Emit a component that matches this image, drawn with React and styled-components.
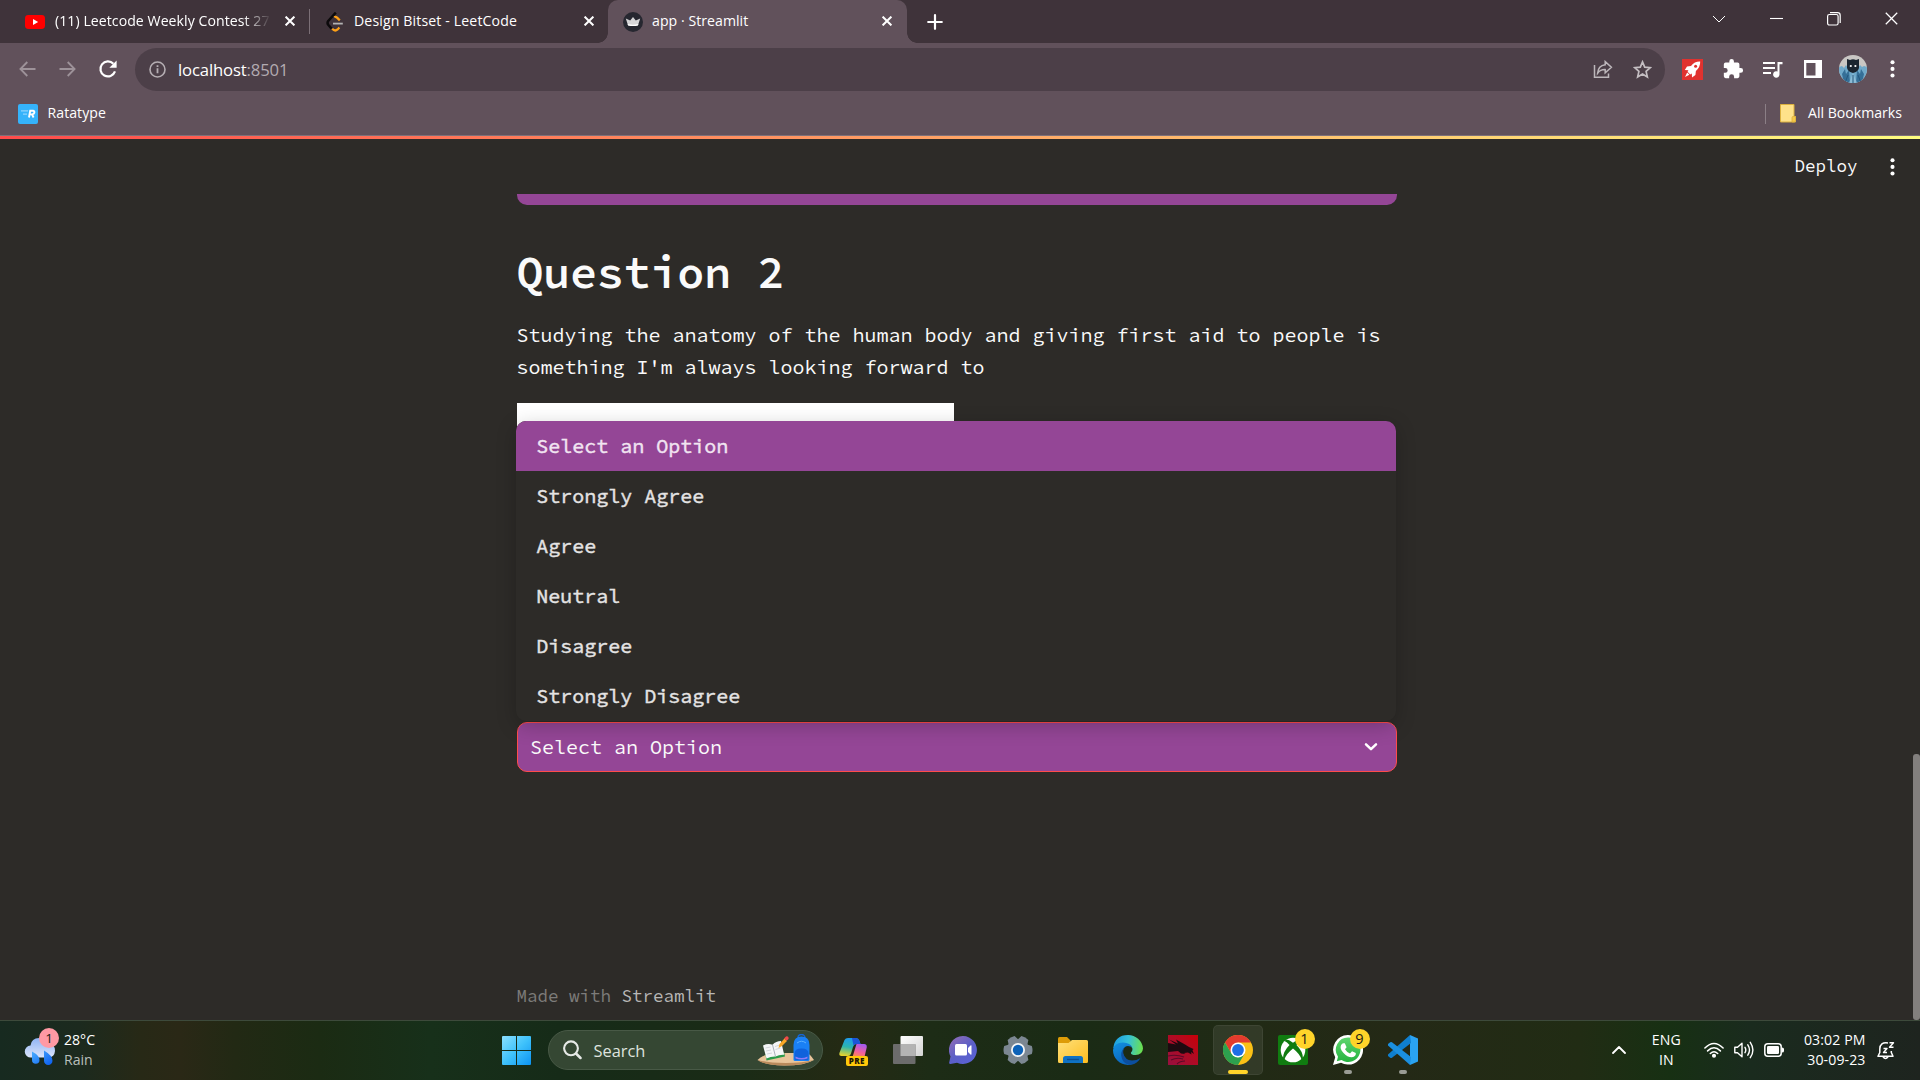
import React from 'react';
import styled, { createGlobalStyle } from 'styled-components';

const GlobalStyle = createGlobalStyle`
  * { box-sizing: border-box; }
  body { margin: 0; background: #2d2b28; overflow: hidden; }
`;

const ui = `'Open Sans', 'Noto Sans', sans-serif`;
const mono = `'Source Code Pro', 'Noto Sans Mono CJK SC', 'DejaVu Sans Mono', monospace`;

const Screen = styled.div`
  width: 1920px;
  height: 1080px;
  display: flex;
  flex-direction: column;
  overflow: hidden;
  font-family: ${ui};
  color: #fff;
`;

/* ---------- browser chrome ---------- */

const TabStrip = styled.header`
  height: 43px;
  flex: none;
  display: flex;
  align-items: stretch;
  background: #3f333a;
`;

const Tab = styled.div`
  width: ${(p) => p.$width}px;
  padding-left: ${(p) => p.$pad}px;
  display: flex;
  align-items: center;
  position: relative;
  background: ${(p) => (p.$active ? '#61515b' : 'transparent')};
  border-radius: 10px 10px 0 0;
  ${(p) =>
    p.$active &&
    `
    &::before, &::after {
      content: '';
      position: absolute;
      bottom: 0;
      width: 10px;
      height: 10px;
    }
    &::before { left: -10px; background: radial-gradient(circle at 0 0, transparent 9.5px, #61515b 10px); }
    &::after { right: -10px; background: radial-gradient(circle at 100% 0, transparent 9.5px, #61515b 10px); }
  `}
`;

const TabTitle = styled.span`
  flex: 1;
  margin-left: ${(p) => p.$gap}px;
  font-size: 14.1px;
  line-height: 20px;
  letter-spacing: ${(p) => p.$track || 0}px;
  white-space: nowrap;
  overflow: hidden;
  margin-top: -1px;
  ${(p) => p.$fade && `-webkit-mask-image: linear-gradient(90deg, #000 188px, transparent 216px);`}
`;

const CloseBox = styled.span`
  width: 20px;
  height: 20px;
  margin-right: ${(p) => p.$right}px;
  margin-top: -1px;
  display: grid;
  place-items: center;
`;

const TabDivider = styled.span`
  width: 1px;
  height: 25px;
  margin-top: 9px;
  background: #7b6f76;
`;

const NewTab = styled.span`
  width: 56px;
  display: grid;
  place-items: center;
`;

const WindowControls = styled.div`
  margin-left: auto;
  display: flex;
  height: 37px;
`;

const WindowButton = styled.span`
  width: 57.4px;
  display: grid;
  place-items: center;
`;

const Toolbar = styled.div`
  height: 61px;
  padding-top: 5px;
  flex: none;
  display: flex;
  align-items: flex-start;
  background: #61515b;
`;

const NavGroup = styled.div`
  width: 135px;
  height: 42px;
  padding-left: 7.5px;
  display: flex;
  align-items: center;
`;

const NavButton = styled.span`
  width: 40px;
  display: grid;
  place-items: center;
`;

const AddressBar = styled.div`
  width: 1530px;
  height: 43px;
  padding: 0 2.5px 0 14px;
  border-radius: 22px;
  display: flex;
  align-items: center;
  background: #4c3f48;
`;

const Address = styled.span`
  flex: 1;
  margin-left: 12px;
  font-size: 16.7px;
  letter-spacing: -0.15px;
  span { color: #b3abb1; }
`;

const AddressIcon = styled.span`
  width: 40px;
  display: grid;
  place-items: center;
`;

const Extensions = styled.div`
  height: 42px;
  padding-left: 7.5px;
  display: flex;
  align-items: center;
`;

const ExtButton = styled.span`
  width: 40px;
  display: grid;
  place-items: center;
`;

const Bookmarks = styled.div`
  height: 31px;
  padding: 0 18px;
  flex: none;
  display: flex;
  align-items: flex-start;
  background: #61515b;
  font-size: 14.1px;
  line-height: 20px;
`;

const BookmarkLabel = styled.span`
  margin-left: ${(p) => p.$gap}px;
  margin-top: -1px;
  letter-spacing: ${(p) => p.$track || 0}px;
`;

const BookmarkDivider = styled.span`
  width: 1px;
  height: 20px;
  margin-left: auto;
  margin-right: 14px;
  background: #8b7f86;
`;

/* ---------- page ---------- */

const PageArea = styled.main`
  height: 885px;
  flex: none;
  position: relative;
  background: #2d2b28;
  border-top: 1px solid #7d7079;
  font-family: ${mono};
  color: #fafafa;
`;

const Decoration = styled.div`
  height: 3px;
  background: linear-gradient(90deg, #ff4b4b, #fffd80);
`;

const AppHeader = styled.div`
  height: 55px;
  padding-right: 18px;
  display: flex;
  justify-content: flex-end;
  align-items: center;
`;

const MonoText = styled.span`
  margin-top: -2px;
  font-size: 17.5px;
  line-height: 28px;
`;

const Kebab = styled.span`
  width: 20px;
  margin-left: 24.5px;
  display: grid;
  place-items: center;
`;

const Column = styled.div`
  width: 880px;
  margin-left: 517px;
`;

const PreviousSelect = styled.div`
  height: 11px;
  border-radius: 0 0 10px 10px;
  background: #944696;
`;

const Heading = styled.h1`
  margin: 40px 0 0 -0.5px;
  font-size: 45px;
  line-height: 54px;
  font-weight: 600;
  letter-spacing: -0.005em;
`;

const Paragraph = styled.p`
  margin: 20px 0 0 -0.4px;
  width: 880px;
  font-size: 20px;
  line-height: 32px;
`;

const SelectWrap = styled.div`
  position: relative;
  margin-top: 20px;
`;

const ImageStub = styled.div`
  width: 437px;
  height: 60px;
  background: #fff;
`;

const SelectBox = styled.div`
  height: 50px;
  margin-top: 259px;
  padding: 0 18px 0 12px;
  display: flex;
  align-items: center;
  justify-content: space-between;
  border: 1px solid #ff4b4b;
  border-radius: 10px;
  background: #944696;
  font-size: 20px;
  line-height: 32px;
`;

const Menu = styled.ul`
  position: absolute;
  top: 18px;
  left: -0.7px;
  width: 879.7px;
  margin: 0;
  padding: 0;
  list-style: none;
  border-radius: 10px;
  overflow: hidden;
  background: #2d2b28;
  box-shadow: 0 5px 20px rgba(0, 0, 0, 0.22);
`;

const Option = styled.li`
  height: 50px;
  padding: 0 20px 1px;
  display: flex;
  align-items: center;
  font-size: 20px;
  line-height: 32px;
  -webkit-text-stroke: 0.45px currentColor;
  color: ${(p) => (p.$selected ? '#f1e4f1' : '#e4e3e3')};
  background: ${(p) => (p.$selected ? '#944696' : 'transparent')};
`;

const Footer = styled.footer`
  margin-top: 210px;
  margin-left: -0.4px;
  font-size: 17.5px;
  line-height: 28px;
  color: #7d7c7a;
  span { color: #b8b7b6; }
`;

const Scrollbar = styled.div`
  position: absolute;
  right: 0;
  bottom: 0;
  width: 7px;
  height: 266px;
  border-radius: 3px;
  background: #827f7d;
`;

/* ---------- taskbar ---------- */

const Taskbar = styled.nav`
  height: 60px;
  flex: none;
  display: flex;
  align-items: center;
  border-top: 1px solid #3d4a3b;
  background: linear-gradient(
    90deg,
    #172a20 0px, #1c2a1e 80px, #272916 140px, #2a2816 180px, #222914 235px, #1b2b13 320px,
    #17301a 430px, #162b18 560px, #1a2b16 740px, #252a14 850px, #1d2c16 930px, #1a2b15 1080px,
    #212a15 1250px, #242916 1400px, #212c14 1580px, #173013 1670px, #1a2b1e 1750px, #1e241f 1920px
  );
  font-size: 14.1px;
  line-height: 20px;
`;

const Weather = styled.div`
  width: 489px;
  padding-left: 24px;
  display: flex;
  align-items: center;
`;

const WeatherIcon = styled.div`
  position: relative;
  width: 32px;
  height: 40px;
`;

const Stack = styled.div`
  display: flex;
  flex-direction: column;
  margin-top: -2px;
  align-items: ${(p) => p.$align || 'flex-start'};
  margin-left: ${(p) => p.$gap || 0}px;
  letter-spacing: ${(p) => p.$track || 0}px;
`;

const Dim = styled.span`
  color: #b9bfbb;
`;

const Badge = styled.span`
  position: absolute;
  top: ${(p) => p.$top}px;
  left: ${(p) => p.$left}px;
  width: 20px;
  height: 20px;
  border-radius: 50%;
  display: grid;
  place-items: center;
  font-size: ${(p) => p.$size || 14.5}px;
  line-height: 20px;
  color: #221b14;
  background: ${(p) => p.$color};
`;

const Slot = styled.div`
  position: relative;
  width: 55px;
  height: 50px;
  display: grid;
  place-items: center;
  margin-top: -1px;
  ${(p) =>
    p.$active &&
    `
    width: 50px;
    margin: -1px 2.5px 0;
    border-radius: 5px;
    background: rgba(255,255,255,.08);
    box-shadow: inset 0 0 0 1px rgba(255,255,255,.06);
  `}
`;

const Indicator = styled.span`
  position: absolute;
  bottom: 1px;
  left: 50%;
  width: ${(p) => (p.$wide ? 20 : 8)}px;
  height: 4px;
  border-radius: 2px;
  transform: translateX(-50%);
  background: ${(p) => (p.$wide ? '#ffd42a' : '#9a9c95')};
`;

const Search = styled.div`
  width: 275px;
  height: 40px;
  margin: -1px 2.5px 0 4px;
  padding: 0 8px 0 14px;
  border-radius: 20px;
  display: flex;
  align-items: center;
  background: #354733;
  border: 1px solid #485946;
  font-size: 16.4px;
  color: #dfe3de;
  span { flex: 1; margin-left: 11.5px; margin-top: 1px; }
`;

const Tray = styled.div`
  margin-left: auto;
  padding-right: 25.5px;
  display: flex;
  align-items: center;
  svg { display: block; }
`;

const TrayItem = styled.div`
  margin-left: ${(p) => p.$gap}px;
  margin-top: -1px;
`;

/* ---------- icons ---------- */

const Cross = ({ size = 10, w = 2 }) => (
  <svg width={size} height={size} viewBox="0 0 10 10" fill="none" stroke="#fff" strokeWidth={w}>
    <path d="M.6.6l8.8 8.8M9.4.6L.6 9.4" />
  </svg>
);

const YouTube = () => (
  <svg width="20" height="14" viewBox="0 0 20 14">
    <rect width="20" height="14" rx="3.4" fill="#f00" />
    <path d="M8 4l5.2 3L8 10z" fill="#fff" />
  </svg>
);

const LeetCode = () => (
  <svg width="18" height="20" viewBox="0 0 18 20" fill="none" strokeWidth="2.2">
    <path d="M9.800 .600L2.200 9Q.800 11 2.400 13L5.600 16.600" stroke="#0c0a0b" strokeWidth="2.500" />
    <path d="M8.200 5.200Q9.600 4.200 11 5.600l2.800 2.800M6.200 16.800Q9 19.800 11.600 17.400l1.800-1.900" stroke="#ffa116" />
    <path d="M7 11.600h9.800" stroke="#b3b3b3" strokeWidth="1.800" />
  </svg>
);

const Crown = () => (
  <svg width="20" height="20" viewBox="0 0 20 20">
    <circle cx="10" cy="10" r="10" fill="#262730" />
    <path d="M2.800 6.600l4.400 2L10 5l2.800 3.600 4.400-2-2.200 6.600q-5 1.600-10 0z" fill="#d6d6d8" />
    <path d="M4.600 12l.5 1.400q5 1.400 9.800 0l.5-1.400q-5.400 1.400-10.800 0z" fill="#fff" />
  </svg>
);

const Plus = () => (
  <svg width="16" height="16" viewBox="0 0 16 16" stroke="#fff" strokeWidth="2.2" strokeLinecap="round">
    <path d="M8 1.200v13.600M1.200 8h13.600" />
  </svg>
);

const Arrow = ({ flip }) => (
  <svg width="17" height="16" viewBox="0 0 17 16" fill="none" stroke="#9d9299" strokeWidth="1.8" transform={flip ? 'scale(-1 1)' : undefined}>
    <path d="M8.300 1L1.400 8l6.900 7M1.400 8H16.500" />
  </svg>
);

const Reload = () => (
  <svg width="20" height="20" viewBox="0 0 20 20" fill="none" stroke="#fff" strokeWidth="2.2">
    <path d="M17 12.400A7.500 7.500 0 1 1 15.400 4.800" />
    <path d="M18.600 1.600v7.200h-7.200z" fill="#fff" stroke="none" />
  </svg>
);

const Info = () => (
  <svg width="17" height="17" viewBox="0 0 17 17" fill="none" stroke="#b5aeb3" strokeWidth="1.600">
    <circle cx="8.500" cy="8.500" r="7.500" />
    <path d="M8.500 7.300v5M8.500 4.300v1.800" strokeWidth="1.800" />
  </svg>
);

const Share = () => (
  <svg width="20" height="19" viewBox="0 0 20 19" fill="none" stroke="#bdb7bb" strokeWidth="1.500">
    <path d="M1.500 5v12.200H15.500v-3.600" />
    <path d="M12.200 1.600l6.200 5.600-6.200 5.600V9.600Q7.400 9.400 4.600 13.200 5.200 5.600 12.200 4.800z" />
  </svg>
);

const Star = () => (
  <svg width="19" height="19" viewBox="0 0 18 18" fill="none" stroke="#c4bec2" strokeWidth="1.600">
    <path d="M9 1.800l2.100 5 5.300.5-4 3.500 1.200 5.300L9 13.300l-4.600 2.800 1.200-5.300-4-3.500 5.300-.5z" />
  </svg>
);

const Rocket = () => (
  <svg width="21" height="21" viewBox="0 0 21 21">
    <rect width="21" height="21" fill="#e0322f" />
    <path d="M18.200 2.600Q12.600 2.400 9 7L5 7.600 2.800 11l3.600.2-.8 1.600 2.600 2.600 1.600-.8.200 3.800 3.400-2.400.5-4Q18.400 8.200 18.200 2.600z" fill="#fff" />
    <path d="M5.200 13.600L3 18l4.400-2.200z" fill="#fff" />
    <circle cx="13.600" cy="7.300" r="1.500" fill="#e0322f" />
  </svg>
);

const Puzzle = () => (
  <svg width="22" height="22" viewBox="0 0 24 24" fill="#fff">
    <path d="M20.500 11H19V7a2 2 0 0 0-2-2h-4V3.500a2.500 2.500 0 0 0-5 0V5H4a2 2 0 0 0-2 2v3.800h1.500a2.700 2.700 0 0 1 0 5.400H2V20a2 2 0 0 0 2 2h3.800v-1.500a2.700 2.700 0 0 1 5.400 0V22H17a2 2 0 0 0 2-2v-4h1.500a2.500 2.500 0 0 0 0-5z" />
  </svg>
);

const Queue = () => (
  <svg width="20" height="17" viewBox="0 0 20 17">
    <path d="M0 2h12M0 7h12M0 12h8" stroke="#fff" strokeWidth="2" />
    <path d="M14.500 1h5v2.200h-3v10.300a3.200 3.200 0 1 1-2-3z" fill="#fff" />
  </svg>
);

const SidePanel = () => (
  <svg width="18" height="18" viewBox="0 0 18 18">
    <path fill="#fff" fillRule="evenodd" d="M0 0h18v18H0zM2.300 3v12.500H11.500V3z" />
  </svg>
);

const Avatar = () => (
  <svg width="28" height="28" viewBox="0 0 28 28">
    <clipPath id="av"><circle cx="14" cy="14" r="14" /></clipPath>
    <g clipPath="url(#av)">
      <rect width="28" height="28" fill="#c9c7c4" />
      <path d="M0 12l3-1 2 2 2-3 2 3 3-2h5l2 2 2-3 2 2 2-1 3 1v16H0z" fill="#6fa9ca" />
      <path d="M3 19l3-5 1 5 3-4 1 13H5zM25 19l-3-5-1 5-3-4-1 13h6z" fill="#356f97" />
      <path d="M8 4l3 1q3-1.400 6 0l3-1v9q-1 4-6 5-5-1-6-5z" fill="#1a2530" />
      <path d="M14 18l-4 10h8z" fill="#8dbdd6" />
      <circle cx="11.800" cy="11" r="1.100" fill="#fff" />
      <circle cx="16.400" cy="11" r="1.100" fill="#fff" />
      <path d="M6 28l3-8M22 28l-3-8M14 20v8" stroke="#24587e" strokeWidth="1" />
    </g>
  </svg>
);

const Dots = () => (
  <svg width="5" height="18" viewBox="0 0 5 18" fill="#fff">
    <circle cx="2.500" cy="2.300" r="2.050" />
    <circle cx="2.500" cy="8.900" r="2.050" />
    <circle cx="2.500" cy="15.500" r="2.050" />
  </svg>
);

const Ratatype = () => (
  <svg width="20" height="20" viewBox="0 0 20 20">
    <rect width="20" height="20" rx="2" fill="#35b3fb" />
    <path d="M3 6.800h7M5 10.200h4" stroke="#8fd4fd" strokeWidth="1.300" />
    <path d="M11 13.500L12.200 6.800H15Q16.800 7 16.300 8.800 16 10.200 14.200 10.400H12M14 10.400L15.600 13.500" fill="none" stroke="#fff" strokeWidth="1.900" />
  </svg>
);

const Folder = () => (
  <svg width="16" height="19" viewBox="0 0 16 19">
    <path d="M.5.5h13.500v12h1.500v5.500H.5z" fill="#ffe28a" stroke="#dcb13e" />
    <path d="M12 18v-4.500q0-1 1-1h2.500v4q0 1.500-1.500 1.500z" fill="#f7c948" stroke="#dcb13e" strokeWidth=".8" />
  </svg>
);

const Chevron = ({ w, h, sw, up, cap = 'round' }) => (
  <svg width={w} height={h} viewBox={`0 0 ${w} ${h}`} fill="none" stroke="#fff" strokeWidth={sw} strokeLinecap={cap} strokeLinejoin={cap === 'round' ? 'round' : 'miter'}>
    <path d={up ? `M1 ${h - 1}L${w / 2} 1L${w - 1} ${h - 1}` : `M1 1L${w / 2} ${h - 1}L${w - 1} 1`} />
  </svg>
);

const SelectChevron = () => (
  <svg width="14" height="10" viewBox="0 0 14 10" fill="none" stroke="#fff" strokeWidth="2.500" strokeLinecap="round" strokeLinejoin="round">
    <path d="M2 2.300L7 7.200 12 2.300" />
  </svg>
);

const RainCloud = () => (
  <svg width="32" height="40" viewBox="0 0 32 40">
    <defs>
      <linearGradient id="cl" x1="0" y1="0" x2="0" y2="1">
        <stop offset="0" stopColor="#8fb4f5" />
        <stop offset="1" stopColor="#dbe4fa" />
      </linearGradient>
      <linearGradient id="dr" x1="0" y1="0" x2="1" y2="1">
        <stop offset="0" stopColor="#4db0ff" />
        <stop offset="1" stopColor="#0a5cf0" />
      </linearGradient>
    </defs>
    <path d="M7 26.500a6 6 0 0 1-.5-12Q7.500 7 15 7q6 0 8.500 6 8 .2 7.500 7-.5 6-6.500 6.500z" fill="url(#cl)" />
    <path d="M8 20.500q7.500 4 7.500 8.500a3.700 3.700 0 0 1-7.500 0zM20 19.500q8.500 5 8.500 10.300a4.100 4.100 0 0 1-8.500 0z" fill="url(#dr)" />
  </svg>
);

const WindowsLogo = () => (
  <svg width="29" height="29" viewBox="0 0 29 29">
    <linearGradient id="wn" x1="0" y1="0" x2="1" y2="1">
      <stop offset="0" stopColor="#8be0ff" />
      <stop offset=".5" stopColor="#3fc2fb" />
      <stop offset="1" stopColor="#0c93f2" />
    </linearGradient>
    <path d="M0 1q0-1 1-1h13v14H0zM15 0h13q1 0 1 1v13H15zM0 15h14v14H1q-1 0-1-1zM15 15h14v13q0 1-1 1H15z" fill="url(#wn)" />
  </svg>
);

const Magnifier = () => (
  <svg width="19" height="20" viewBox="0 0 19 20" fill="none" stroke="#e6e9e6" strokeLinecap="round">
    <circle cx="8" cy="8.300" r="6.900" strokeWidth="2.100" />
    <path d="M13 13.500l4.500 4.500" strokeWidth="2.500" />
  </svg>
);

const SchoolArt = () => (
  <svg width="57" height="32" viewBox="0 0 57 32">
    <path d="M.5 26Q8 19 20 19H50q3 1 7 7-9 5.500-30 5.500Q8 31 .5 26z" fill="#e8c49a" />
    <path d="M.5 26q10 3 28 3t28-3q-9 5.500-29 5.500T.5 26z" fill="#b98a5c" />
    <path d="M7.500 15L9.500 26.500 28 22.500 27 18z" fill="#2b9a4a" />
    <path d="M6 11.500q5-2.500 9.500-.8Q19 7 24 7l3.200 13.700q-5-.3-8.700 1.800-4.500-.2-9 2z" fill="#f5f6f8" />
    <path d="M15.500 10.700l3 11.800" stroke="#a3aab5" strokeWidth=".9" fill="none" />
    <path d="M8.500 14l5-1M9 17l5-1M10 20l5-1M18 12.500l5-1.500M18.500 15.500l5-1.500" stroke="#c3c8d0" strokeWidth=".7" fill="none" />
    <path d="M21.500 14l1-4 5-5.500 2.500 2.500-5 5z" fill="#f9a825" />
    <path d="M27 4.500l2-2q1.500-.6 2.300.6.800 1.200 0 2.200l-1.600 1.500z" fill="#ef4a4a" />
    <path d="M41 3.500a3.500 3 0 0 1 7 0" fill="none" stroke="#1565d8" strokeWidth="1.300" />
    <path d="M36.500 11q0-8.500 8-8.500t8 8.500v14.500q0 1.500-1.500 1.500H38q-1.500 0-1.500-1.500z" fill="#1a80f5" />
    <path d="M37.500 19.500q0-5 7-5t7 5v5q0 1.500-1.500 1.500H39q-1.500 0-1.500-1.500z" fill="#0f62dc" />
    <path d="M38.500 22.500q6 3 12 0v2q-6 2-12 0z" fill="#8f7cf5" />
    <path d="M40 9q4.500-3.500 9 0" stroke="#5cb0ff" strokeWidth="1" fill="none" />
  </svg>
);

const PreTag = styled.span`
  position: absolute;
  left: 20px;
  top: 31px;
  width: 22.5px;
  height: 9.5px;
  border-radius: 2px;
  background: #ffc80a;
  color: #1d1704;
  font: 800 8px/9.5px ${ui};
  letter-spacing: 0.4px;
  text-align: center;
`;

const Copilot = () => (
  <svg width="30" height="30" viewBox="0 0 30 30">
    <defs>
      <linearGradient id="cp1" x1=".5" y1="0" x2=".3" y2="1">
        <stop offset="0" stopColor="#1e9af0" />
        <stop offset=".5" stopColor="#2bb5b0" />
        <stop offset="1" stopColor="#e8d22c" />
      </linearGradient>
      <linearGradient id="cp2" x1=".6" y1="0" x2=".3" y2="1">
        <stop offset="0" stopColor="#a45af0" />
        <stop offset=".6" stopColor="#f2609c" />
        <stop offset="1" stopColor="#fb8a50" />
      </linearGradient>
    </defs>
    <path d="M6.500 5Q7.500 3 10 3h8q2.500 0 3.300 2.500L22.500 9H18q-2 0-3 3l-2 6.500Q12.300 21 10 21H3.500Q.8 21 1.400 18z" fill="url(#cp1)" />
    <path d="M14 3h4q2.500 0 3.300 2.500L22.500 9H18q-1.500 0-2.500 1.600z" fill="#1b55d8" />
    <path d="M18.500 9H26q3.300 0 2.700 3.500L26.500 22H14.500z" fill="url(#cp2)" />
  </svg>
);

const TaskView = () => (
  <svg width="30" height="28" viewBox="0 0 30 28">
    <linearGradient id="tv" x1="0" y1="0" x2="1" y2="1">
      <stop offset="0" stopColor="#fff" />
      <stop offset="1" stopColor="#d4d4d4" />
    </linearGradient>
    <rect x="7.500" width="22.500" height="20" rx="1" fill="url(#tv)" />
    <rect y="8" width="22.500" height="20" rx="1" fill="#6c6c6c" />
    <path d="M7.500 8h15v12h-15z" fill="#b3b3b3" />
  </svg>
);

const Chat = () => (
  <svg width="28" height="28" viewBox="0 0 28 28">
    <linearGradient id="ch" x1=".1" y1=".1" x2=".8" y2="1">
      <stop offset="0" stopColor="#8b6bb8" />
      <stop offset=".5" stopColor="#5b5fc7" />
      <stop offset="1" stopColor="#5a62d6" />
    </linearGradient>
    <path d="M14 0a14 14 0 1 1-6 26.700L1.500 28q-1.700 0-1.300-1.600L1.500 20.500A14 14 0 0 1 14 0z" fill="url(#ch)" />
    <rect x="6" y="8" width="12" height="11.500" rx="1.500" fill="#fff" />
    <path d="M19 12l2.500-2.500q1-.7 1 .5v8q0 1.200-1 .5L19 16z" fill="#fff" />
  </svg>
);

const Gear = () => (
  <svg width="30" height="30" viewBox="0 0 30 30">
    <g fill="#7c8792">
      <circle cx="15" cy="15" r="11" />
      {[0, 60, 120, 180, 240, 300].map((a) => (
        <path key={a} d="M9.500 6L11 1.200Q15-.2 19 1.200L20.500 6z" transform={`rotate(${a + 30} 15 15)`} />
      ))}
    </g>
    <circle cx="15" cy="15" r="7" fill="#f3f5f7" />
    <circle cx="15" cy="15" r="5.200" fill="#0d62b8" />
  </svg>
);

const Explorer = () => (
  <svg width="30" height="28" viewBox="0 0 30 28">
    <linearGradient id="ex" x1="0" y1="0" x2="1" y2="1">
      <stop offset="0" stopColor="#ffe07a" />
      <stop offset="1" stopColor="#fdbd1f" />
    </linearGradient>
    <path d="M0 2.500Q0 1 1.500 1H9l3.500 3.500V10H0z" fill="#dd9c08" />
    <path d="M0 7h10.500L14 4h14.500Q30 4 30 5.500V25.500Q30 27 28.500 27h-27Q0 27 0 25.500z" fill="url(#ex)" />
    <path d="M5 27v-4.500Q5 20 7.500 20h15q2.500 0 2.500 2.500V27z" fill="#0f72c4" />
    <path d="M9 23.500h12" stroke="#0a4f93" strokeWidth="1.400" />
  </svg>
);

const Edge = () => (
  <svg width="30" height="30" viewBox="0 0 30 30">
    <defs>
      <linearGradient id="eg1" x1="0" y1=".3" x2="1" y2=".4">
        <stop offset="0" stopColor="#1b9de2" />
        <stop offset=".5" stopColor="#35c1d8" />
        <stop offset="1" stopColor="#6be04f" />
      </linearGradient>
      <linearGradient id="eg2" x1="0" y1="0" x2=".5" y2="1">
        <stop offset="0" stopColor="#1191e0" />
        <stop offset="1" stopColor="#0b63bd" />
      </linearGradient>
    </defs>
    <path d="M15 0A15 15 0 0 1 30 13.500Q29.500 20 22.500 20q-5 0-4.500-2.500 1.500-1.500 1.500-3.500Q19 10 13 9 3 9 .2 13.500 1.800 0 15 0z" fill="url(#eg1)" />
    <path d="M0 15Q1 8 10 7.600q7.500.2 9.400 5.400-1.500-2-4.400-2-3.500 0-5 4-1 7 5 11 4 2.600 8.800 1.300Q19 30 15 30A15 15 0 0 1 0 15z" fill="url(#eg2)" />
    <path d="M12.300 12Q9.600 14 10.300 18.500 12 25 19 25.500q4.500 0 8.600-2.600Q24 29 17 29.900 9 28.500 8.200 20.500 8 14.500 12.300 12z" fill="#0c4f9f" />
  </svg>
);

const Dragon = () => (
  <svg width="30" height="30" viewBox="0 0 30 30">
    <linearGradient id="dg" x1="0" y1="1" x2="1" y2="0">
      <stop offset="0" stopColor="#96103f" />
      <stop offset=".6" stopColor="#b30a20" />
      <stop offset="1" stopColor="#c80008" />
    </linearGradient>
    <rect width="30" height="30" fill="url(#dg)" />
    <path d="M0 8l8 1.500L1 4.500l9 4L8 4.500l9 5 4 2.500 4.500 2-1 1.500 1.500 3.500-3-2 .5 2.500-3.500-2-4 .5 1.500 1-4.500-.5-3-2.500L0 17z" fill="#1d0a10" />
    <path d="M0 21q8-2 16 1M3 25q6-3 12-1M9 29q3-3 8-3" stroke="#5a0a28" strokeWidth="1.100" fill="none" />
  </svg>
);

const Chrome = () => (
  <svg width="30" height="30" viewBox="0 0 30 30">
    <circle cx="15" cy="15" r="15" fill="#fbc116" />
    <path d="M2 7.500A15 15 0 0 1 28 7.500H15L8.500 18.700z" fill="#e33b2e" />
    <path d="M2 7.500L8.500 18.700 15 22.500l6.500-3.700L15 30A15 15 0 0 1 2 7.500z" fill="#2da04e" />
    <circle cx="15" cy="15" r="7.500" fill="#fff" />
    <circle cx="15" cy="15" r="5.900" fill="#1f6fe5" />
  </svg>
);

const Xbox = () => (
  <svg width="30" height="30" viewBox="0 0 30 30">
    <rect width="30" height="30" rx="2" fill="#107c10" />
    <circle cx="15" cy="15" r="12.300" fill="#fff" />
    <path d="M8 4.500q3 0 7 3.200 4-3.200 7-3.200l1.500 1.500Q21 7 18.500 10q6.500 6.500 6.500 13.500l-1.500 1Q22 19 15 13.500 8 19 6.500 24.500l-1.500-1Q5 16.500 11.500 10 9 7 6.500 6z" fill="#107c10" />
  </svg>
);

const WhatsApp = () => (
  <svg width="30" height="30" viewBox="0 0 30 30">
    <linearGradient id="wa" x1="0" y1="0" x2="0" y2="1">
      <stop offset="0" stopColor="#5fd66f" />
      <stop offset="1" stopColor="#25b33f" />
    </linearGradient>
    <path d="M15.200 0A14.800 14.800 0 1 1 8 27.700L0 30l2.200-7.800A14.800 14.800 0 0 1 15.200 0z" fill="#fff" />
    <path d="M15.200 2.600A12.200 12.200 0 1 1 8.500 25L3.800 26.200 5 21.700A12.200 12.200 0 0 1 15.200 2.600z" fill="url(#wa)" />
    <path d="M10.300 8.200h1.500l1.800 4-1.600 2q2 3.300 5 4.300l2-2.200 3.800 1.800q.6 3.600-4 4.200-4.500 0-8.500-4.500Q6.500 13.500 8 10.200 9 8.300 10.300 8.200z" fill="#fff" />
  </svg>
);

const VSCode = () => (
  <svg width="30" height="30" viewBox="0 0 30 30">
    <path d="M22 0l8 3.500v23L22 30z" fill="#2aa3f2" />
    <path d="M22 0L0 19.500V21l2.200 1.800q.9.500 1.800 0L23 8z" fill="#0f7fcf" />
    <path d="M22 30L0 10.500V9L2.200 7.300q.9-.5 1.800 0L23 22z" fill="#1b8fe0" />
  </svg>
);

const Wifi = () => (
  <svg width="20" height="16" viewBox="0 0 20 16" fill="none" stroke="#fff" strokeWidth="1.500" strokeLinecap="round">
    <path d="M.9 6Q10-3 19.100 6M3.600 8.900q6.400-6.200 12.800 0M6.300 11.500q3.700-3.500 7.400 0" />
    <circle cx="10" cy="13.700" r="1.300" fill="#fff" />
  </svg>
);

const Speaker = () => (
  <svg width="20" height="18" viewBox="0 0 20 18" fill="none" stroke="#fff" strokeWidth="1.400" strokeLinecap="round" strokeLinejoin="round">
    <path d="M.8 6.200V11.800H3.500L8 15.800V2.200L3.500 6.200z" />
    <path d="M11 6.300q1.600 2.700 0 5.400M13.800 3.800q3.400 5.200 0 10.400M16.300 1.300q5.200 7.700 0 15.400" />
  </svg>
);

const Battery = () => (
  <svg width="20" height="14" viewBox="0 0 20 14">
    <rect x=".8" y=".8" width="16.400" height="12.400" rx="3" fill="none" stroke="#fff" strokeWidth="1.500" />
    <rect x="3" y="3" width="12" height="8" rx="1.200" fill="#fff" />
    <path d="M18 4.500q2 0 2 1.500v2q0 1.500-2 1.500z" fill="#fff" />
  </svg>
);

const Bell = () => (
  <svg width="18" height="19" viewBox="0 0 18 19" fill="none" stroke="#fff" strokeWidth="1.500" strokeLinejoin="round">
    <path d="M11 2Q3 .8 2.800 8v3.500L1 15.300h15l-1.700-3.800V10" />
    <path d="M6 15.800q2.500 3.600 5 0" />
    <path d="M6.500 7.500H10l-3.500 4H10M12.500 1.800h4l-4 4.400h4" strokeWidth="1.400" />
  </svg>
);

/* ---------- content ---------- */

const options = ['Select an Option', 'Strongly Agree', 'Agree', 'Neutral', 'Disagree', 'Strongly Disagree'];

const apps = [
  { icon: <Copilot />, pre: true },
  { icon: <TaskView /> },
  { icon: <Chat /> },
  { icon: <Gear /> },
  { icon: <Explorer /> },
  { icon: <Edge /> },
  { icon: <Dragon /> },
  { icon: <Chrome />, active: true, run: true },
  { icon: <Xbox />, badge: '1' },
  { icon: <WhatsApp />, badge: '9', run: true },
  { icon: <VSCode />, run: true },
];

export default function App() {
  return (
    <Screen>
      <GlobalStyle />
      <TabStrip>
        <Tab $width={309} $pad={25}>
          <YouTube />
          <TabTitle $gap={10} $fade $track={0.06}>(11) Leetcode Weekly Contest 27</TabTitle>
          <CloseBox $right={9}><Cross /></CloseBox>
        </Tab>
        <TabDivider />
        <Tab $width={298} $pad={16}>
          <LeetCode />
          <TabTitle $gap={10} $track={0.14}>Design Bitset - LeetCode</TabTitle>
          <CloseBox $right={9}><Cross /></CloseBox>
        </Tab>
        <Tab $width={299} $pad={15} $active>
          <Crown />
          <TabTitle $gap={9} $track={0.05}>app · Streamlit</TabTitle>
          <CloseBox $right={10}><Cross /></CloseBox>
        </Tab>
        <NewTab><Plus /></NewTab>
        <WindowControls>
          <WindowButton><Chevron w={14} h={8} sw={1} cap="butt" /></WindowButton>
          <WindowButton>
            <svg width="13" height="3"><path d="M0 1.500h13" stroke="#fff" strokeWidth="1.100" /></svg>
          </WindowButton>
          <WindowButton>
            <svg width="14" height="14" viewBox="0 0 14 14" fill="none" stroke="#fff" strokeWidth="1.200">
              <rect x=".6" y="2.500" width="10.500" height="10.500" rx="1.800" />
              <path d="M3 .7h7.500q2.700 0 2.700 2.700V11" />
            </svg>
          </WindowButton>
          <WindowButton><Cross size={13} w={0.95} /></WindowButton>
        </WindowControls>
      </TabStrip>

      <Toolbar>
        <NavGroup>
          <NavButton><Arrow /></NavButton>
          <NavButton><Arrow flip /></NavButton>
          <NavButton><Reload /></NavButton>
        </NavGroup>
        <AddressBar>
          <Info />
          <Address>localhost<span>:8501</span></Address>
          <AddressIcon><Share /></AddressIcon>
          <AddressIcon><Star /></AddressIcon>
        </AddressBar>
        <Extensions>
          <ExtButton><Rocket /></ExtButton>
          <ExtButton><Puzzle /></ExtButton>
          <ExtButton><Queue /></ExtButton>
          <ExtButton><SidePanel /></ExtButton>
          <ExtButton><Avatar /></ExtButton>
          <ExtButton><Dots /></ExtButton>
        </Extensions>
      </Toolbar>

      <Bookmarks>
        <Ratatype />
        <BookmarkLabel $gap={9.5} $track={0.05}>Ratatype</BookmarkLabel>
        <BookmarkDivider />
        <Folder />
        <BookmarkLabel $gap={12}>All Bookmarks</BookmarkLabel>
      </Bookmarks>

      <PageArea>
        <Decoration />
        <AppHeader>
          <MonoText>Deploy</MonoText>
          <Kebab><Dots /></Kebab>
        </AppHeader>
        <Column>
          <PreviousSelect />
          <Heading>Question 2</Heading>
          <Paragraph>
            Studying the anatomy of the human body and giving first aid to people is something I'm always looking forward to
          </Paragraph>
          <SelectWrap>
            <ImageStub />
            <SelectBox>
              Select an Option
              <SelectChevron />
            </SelectBox>
            <Menu>
              {options.map((o, i) => (
                <Option key={o} $selected={i === 0}>{o}</Option>
              ))}
            </Menu>
          </SelectWrap>
          <Footer>Made with <span>Streamlit</span></Footer>
        </Column>
        <Scrollbar />
      </PageArea>

      <Taskbar>
        <Weather>
          <WeatherIcon>
            <RainCloud />
            <Badge $top={-3} $left={15} $size={13.5} $color="#ff99a4">1</Badge>
          </WeatherIcon>
          <Stack $gap={8}>
            <span>28°C</span>
            <Dim>Rain</Dim>
          </Stack>
        </Weather>
        <Slot><WindowsLogo /></Slot>
        <Search>
          <Magnifier />
          <span>Search</span>
          <SchoolArt />
        </Search>
        {apps.map((a, i) => (
          <Slot key={i} $active={a.active}>
            {a.icon}
            {a.pre && <PreTag>PRE</PreTag>}
            {a.badge && <Badge $top={4} $left={29} $color="#ffd42a">{a.badge}</Badge>}
            {a.run && <Indicator $wide={a.active} />}
          </Slot>
        ))}
        <Tray>
          <TrayItem><Chevron w={14} h={8} sw={1.800} up /></TrayItem>
          <Stack $gap={26} $align="center" $track={0.15}><span>ENG</span><span>IN</span></Stack>
          <TrayItem $gap={23}><Wifi /></TrayItem>
          <TrayItem $gap={10}><Speaker /></TrayItem>
          <TrayItem $gap={10}><Battery /></TrayItem>
          <Stack $gap={20} $align="flex-end" $track={0.1}><span>03:02 PM</span><span>30-09-23</span></Stack>
          <TrayItem $gap={11}><Bell /></TrayItem>
        </Tray>
      </Taskbar>
    </Screen>
  );
}
